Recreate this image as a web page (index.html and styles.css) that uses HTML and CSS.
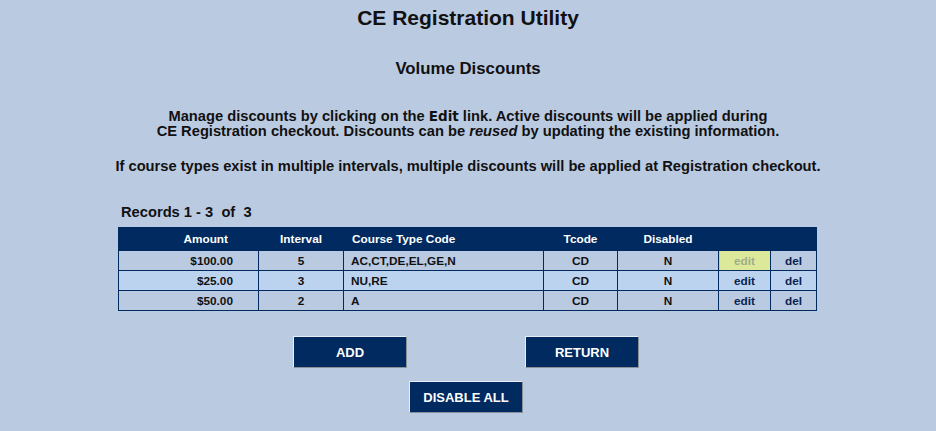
FILE: index.html
```html
<!DOCTYPE html>
<html>
<head>
<meta charset="utf-8">
<link rel="stylesheet" href="styles.css">
</head>
<body>
<div class="page">
  <h1 class="title">CE Registration Utility</h1>
  <h2 class="subtitle">Volume Discounts</h2>
  <p class="intro">Manage discounts by clicking on the <b class="edit-word">Edit</b> link. Active discounts will be applied during<br>CE Registration checkout. Discounts can be <i>reused</i> by updating the existing information.</p>
  <p class="intro note">If course types exist in multiple intervals, multiple discounts will be applied at Registration checkout.</p>
  <div class="records-wrap">
    <div class="records">Records 1 - 3&nbsp; of&nbsp; 3</div>
    <table class="grid">
      <colgroup>
        <col class="w-amount">
        <col class="w-interval">
        <col class="w-code">
        <col class="w-tcode">
        <col class="w-dis">
        <col class="w-edit">
        <col class="w-del">
      </colgroup>
      <thead>
        <tr>
          <th class="c-amount">Amount</th>
          <th>Interval</th>
          <th class="c-code">Course Type Code</th>
          <th>Tcode</th>
          <th>Disabled</th>
          <th></th>
          <th></th>
        </tr>
      </thead>
      <tbody>
        <tr class="odd">
          <td class="c-amount">$100.00</td>
          <td>5</td>
          <td class="c-code">AC,CT,DE,EL,GE,N</td>
          <td>CD</td>
          <td>N</td>
          <td class="hl"><span class="lnk">edit</span></td>
          <td><span class="lnk">del</span></td>
        </tr>
        <tr class="even">
          <td class="c-amount">$25.00</td>
          <td>3</td>
          <td class="c-code">NU,RE</td>
          <td>CD</td>
          <td>N</td>
          <td><span class="lnk">edit</span></td>
          <td><span class="lnk">del</span></td>
        </tr>
        <tr class="odd">
          <td class="c-amount">$50.00</td>
          <td>2</td>
          <td class="c-code">A</td>
          <td>CD</td>
          <td>N</td>
          <td><span class="lnk">edit</span></td>
          <td><span class="lnk">del</span></td>
        </tr>
      </tbody>
    </table>
  </div>
  <div class="btn-row">
    <button class="btn">ADD</button>
    <button class="btn">RETURN</button>
  </div>
  <div class="btn-row single">
    <button class="btn">DISABLE ALL</button>
  </div>
</div>
</body>
</html>
```

FILE: styles.css
```css
html, body {
  margin: 0;
  padding: 0;
  background: #bacae1;
}
body {
  font-family: "Liberation Sans", Arial, sans-serif;
  color: #111;
}
.page {
  width: 936px;
  height: 431px;
  display: flex;
  flex-direction: column;
  align-items: center;
}
.title {
  margin: 6px 0 0;
  font-size: 21px;
  line-height: 24px;
  font-weight: bold;
}
.subtitle {
  margin: 29px 0 0;
  font-size: 16.8px;
  line-height: 20px;
  font-weight: bold;
}
.intro {
  margin: 29.5px 0 0;
  font-size: 14.7px;
  line-height: 15px;
  font-weight: bold;
  text-align: center;
}
.intro.note {
  margin-top: 20px;
}
.edit-word {
  font-family: "DejaVu Sans", sans-serif;
  font-size: 13.5px;
}
.records-wrap {
  margin-top: 30px;
  margin-right: 2px;
  width: 698px;
  display: flex;
  flex-direction: column;
}
.records {
  font-size: 14.7px;
  font-weight: bold;
  line-height: 16px;
  padding-left: 3px;
  margin-bottom: 7.5px;
}
.grid {
  border-collapse: collapse;
  width: 698px;
  table-layout: fixed;
  font-size: 11.8px;
  font-weight: bold;
}
.w-amount { width: 140px; }
.w-interval { width: 85px; }
.w-code { width: 200px; }
.w-tcode { width: 74px; }
.w-dis { width: 101px; }
.w-edit { width: 52px; }
.w-del { width: 46px; }
.grid th {
  background: #002a60;
  color: #fff;
  height: 22px;
  padding: 0;
  font-weight: bold;
  border: 1px solid #002a60;
}
.grid td {
  height: 19px;
  padding: 0;
  border: 1px solid #002a60;
  text-align: center;
}
.grid tr.odd td { background: #bacae1; }
.grid tr.even td { background: #bcd3ef; }
.grid .c-amount { text-align: right; padding-right: 25px; }
.grid th.c-amount { padding-right: 30px; }
.grid .c-code { text-align: left; padding-left: 7px; }
.grid th.c-code { padding-left: 8px; }
.lnk {
  color: #0b2350;
}
.grid tr td.hl {
  background: #dde99a;
  box-shadow: inset 1px 0 0 #bacae1;
}
.hl .lnk { color: #a0ad88; }
.btn-row {
  margin-top: 25px;
  margin-right: 4px;
  display: flex;
  gap: 118px;
}
.btn-row.single {
  margin-top: 13px;
}
.btn {
  width: 114px;
  height: 32px;
  background: #002a60;
  color: #fff;
  font-family: "Liberation Sans", Arial, sans-serif;
  font-size: 13px;
  font-weight: bold;
  border: 1px solid;
  border-color: #e8edf5 #8a8f98 #8a8f98 #e8edf5;
  padding: 0;
}
```
